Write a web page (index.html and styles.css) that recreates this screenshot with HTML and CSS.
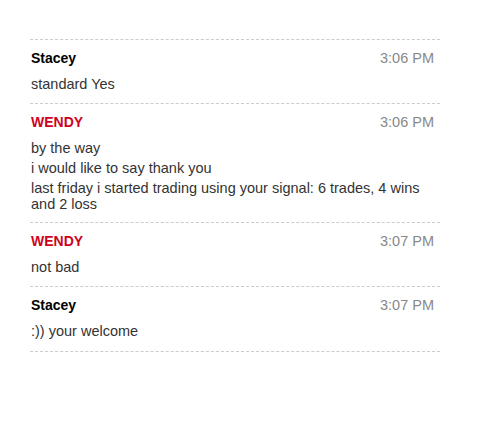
FILE: index.html
```html
<!DOCTYPE html>
<html>
<head>
<meta charset="utf-8">
<link rel="stylesheet" href="styles.css">
</head>
<body>
<div class="chat">
  <div class="msg">
    <div class="head"><span class="name">Stacey</span><span class="time">3:06 PM</span></div>
    <div class="body"><p>standard Yes</p></div>
  </div>
  <div class="msg">
    <div class="head"><span class="name red">WENDY</span><span class="time">3:06 PM</span></div>
    <div class="body">
      <p>by the way</p>
      <p>i would like to say thank you</p>
      <p>last friday i started trading using your signal: 6 trades, 4 wins and 2 loss</p>
    </div>
  </div>
  <div class="msg">
    <div class="head"><span class="name red">WENDY</span><span class="time">3:07 PM</span></div>
    <div class="body"><p>not bad</p></div>
  </div>
  <div class="msg last">
    <div class="head"><span class="name">Stacey</span><span class="time">3:07 PM</span></div>
    <div class="body"><p>:)) your welcome</p></div>
  </div>
</div>
</body>
</html>
```
FILE: styles.css
```css
html, body {
  margin: 0;
  padding: 0;
  background: #fff;
}
body {
  font-family: "Liberation Sans", Arial, sans-serif;
  padding-top: 39px;
}
.chat {
  margin-left: 30px;
  width: 410px;
}
.msg {
  border-top: 1px dashed #cccccc;
  padding: 8px 6px 6.5px 1px;
}
.msg.last {
  border-bottom: 1px dashed #cccccc;
  padding-bottom: 8.5px;
}
.head {
  display: flex;
  justify-content: space-between;
  align-items: baseline;
  line-height: 20px;
}
.name {
  font-weight: bold;
  font-size: 14px;
  color: #000;
}
.name.red {
  color: #d0021b;
}
.time {
  font-size: 14.5px;
  color: #888;
}
.body {
  padding-top: 8px;
  color: #333;
  font-size: 14.5px;
  line-height: 16px;
}
.body p {
  margin: 0 0 4px;
}
```
